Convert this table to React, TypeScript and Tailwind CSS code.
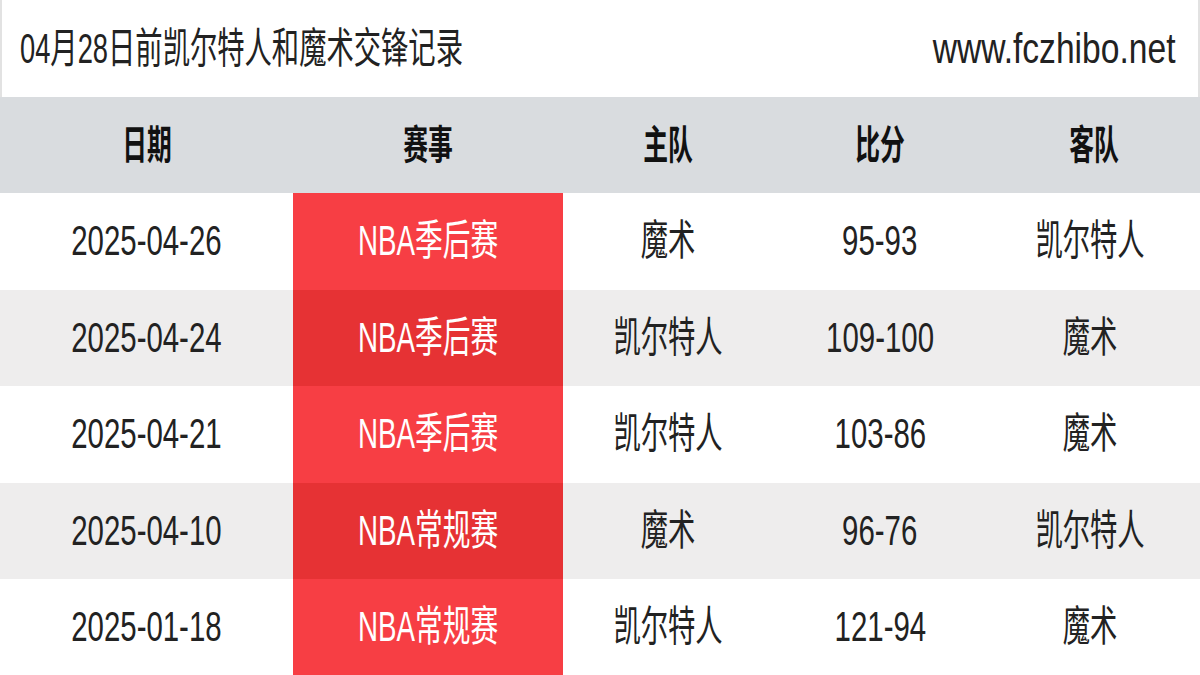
const rows = [
  { date: "2025-04-26", event: "NBA季后赛", home: "魔术", score: "95-93", away: "凯尔特人" },
  { date: "2025-04-24", event: "NBA季后赛", home: "凯尔特人", score: "109-100", away: "魔术" },
  { date: "2025-04-21", event: "NBA季后赛", home: "凯尔特人", score: "103-86", away: "魔术" },
  { date: "2025-04-10", event: "NBA常规赛", home: "魔术", score: "96-76", away: "凯尔特人" },
  { date: "2025-01-18", event: "NBA常规赛", home: "凯尔特人", score: "121-94", away: "魔术" },
];

const headers = ["日期", "赛事", "主队", "比分", "客队"];

const font = { fontFamily: '"Liberation Sans", "Noto Sans CJK SC", sans-serif' };

export default function App() {
  return (
    <div className="w-[1200px] h-[675px] overflow-hidden bg-white text-[#222]" style={font}>
      {/* Title bar */}
      <div className="h-[97px] flex items-center justify-between border-x-2 border-[#e2e2e2] pl-[18px] pr-[23px]">
        <span className="inline-block text-[42px] leading-none origin-left scale-x-[0.65] whitespace-nowrap">
          04月28日前凯尔特人和魔术交锋记录
        </span>
        <span className="inline-block text-[42px] leading-none origin-right scale-x-[0.8] whitespace-nowrap">
          www.fczhibo.net
        </span>
      </div>

      {/* Table */}
      <div className="grid grid-cols-[293px_270px_210px_214px_1fr]">
        {headers.map((h) => (
          <div key={h} className="h-[96px] bg-[#d9dcdf] flex items-center justify-center">
            <span className="inline-block text-[40px] font-bold leading-none scale-x-[0.62] whitespace-nowrap text-[#111]">
              {h}
            </span>
          </div>
        ))}

        {rows.map((r, i) => {
          const alt = i % 2 === 1;
          const bg = alt ? "bg-[#eeeded]" : "bg-white";
          const red = alt ? "bg-[#e63234]" : "bg-[#f73e44]";
          return [
            <div key={`d${i}`} className={`h-[96.5px] ${bg} flex items-center justify-center`}>
              <span className="inline-block text-[42px] leading-none scale-x-[0.7] whitespace-nowrap">{r.date}</span>
            </div>,
            <div key={`e${i}`} className={`h-[96.5px] ${red} flex items-center justify-center`}>
              <span className="inline-block text-[42px] leading-none scale-x-[0.66] whitespace-nowrap text-white">{r.event}</span>
            </div>,
            <div key={`h${i}`} className={`h-[96.5px] ${bg} flex items-center justify-center`}>
              <span className="inline-block text-[42px] leading-none scale-x-[0.65] whitespace-nowrap">{r.home}</span>
            </div>,
            <div key={`s${i}`} className={`h-[96.5px] ${bg} flex items-center justify-center`}>
              <span className="inline-block text-[42px] leading-none scale-x-[0.7] whitespace-nowrap">{r.score}</span>
            </div>,
            <div key={`a${i}`} className={`h-[96.5px] ${bg} flex items-center justify-center pr-[6px]`}>
              <span className="inline-block text-[42px] leading-none scale-x-[0.65] whitespace-nowrap">{r.away}</span>
            </div>,
          ];
        })}
      </div>
    </div>
  );
}
